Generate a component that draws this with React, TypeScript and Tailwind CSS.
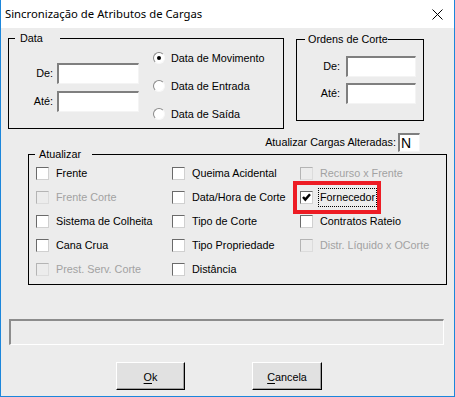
const font = "font-['Liberation_Sans',Arial,sans-serif]";

function Field({ w, h, children }: { w: string; h: string; children?: React.ReactNode }) {
  return (
    <div
      className={`${w} ${h} box-border border-t-2 border-l-2 border-b border-r border-t-[#7f7f7f] border-l-[#7f7f7f] border-b-[#f4f4f4] border-r-[#f4f4f4] bg-white`}
    >
      {children}
    </div>
  );
}

function Radio({ label, checked }: { label: string; checked?: boolean }) {
  return (
    <div className="flex h-[20px] items-center">
      <div className="flex h-[12px] w-[12px] items-center justify-center rounded-full border border-t-[#8a8a8a] border-l-[#8a8a8a] border-b-[#f8f8f8] border-r-[#f8f8f8] bg-white">
        {checked && <div className="h-[4px] w-[4px] rounded-full bg-black" />}
      </div>
      <span className="ml-[6px]">{label}</span>
    </div>
  );
}

function Check({
  label,
  checked,
  disabled,
  focused,
  marked,
}: {
  label: string;
  checked?: boolean;
  disabled?: boolean;
  focused?: boolean;
  marked?: boolean;
}) {
  return (
    <div className="relative flex h-[24px] items-center">
      <div
        className={`flex h-[13px] w-[13px] items-center justify-center border ${
          disabled
            ? "border-t-[#b4b4b4] border-l-[#b4b4b4] border-b-[#dcdcdc] border-r-[#dcdcdc] bg-[#ececec]"
            : "border-t-[#6a6a6a] border-l-[#6a6a6a] border-b-[#d0d0d0] border-r-[#d0d0d0] bg-white"
        }`}
      >
        {checked && (
          <svg width="9" height="9" viewBox="0 0 9 9">
            <path d="M1 4 L3.3 6.6 L8 1.2" fill="none" stroke="#000" strokeWidth="2.4" />
          </svg>
        )}
      </div>
      <span
        className={`ml-[5px] px-[1px] ${disabled ? "text-[#a2a2a2]" : "text-black"} ${
          focused ? "border border-dotted border-black leading-[17px]" : "border border-transparent"
        }`}
      >
        {label}
      </span>
      {marked && (
        <div className="pointer-events-none absolute left-[-7px] top-[-4px] h-[33px] w-[88px] border-4 border-[#ed1c24]" />
      )}
    </div>
  );
}

function Group({
  label,
  left,
  className,
  children,
}: {
  label: string;
  left: string;
  className: string;
  children?: React.ReactNode;
}) {
  return (
    <div className={`relative box-border border border-black ${className}`}>
      <div className={`absolute top-[-7px] ${left} bg-[#ececec] leading-[13px]`}>{label}</div>
      {children}
    </div>
  );
}

export default function App() {
  return (
    <div
      className={`${font} box-border h-[397px] w-[455px] border-x border-b border-[#1c86db] bg-[#ececec] text-[10.8px] text-black`}
    >
      <div className="flex h-[28px] items-center justify-between bg-white pl-[4px] pr-[11px]">
        <span className="font-['Noto_Sans',sans-serif] text-[11.3px] leading-none">
          Sincronização de Atributos de Cargas
        </span>
        <svg width="11" height="11" viewBox="0 0 11 11">
          <path d="M0.5 0.5 L10.5 10.5 M10.5 0.5 L0.5 10.5" stroke="#000" strokeWidth="1" />
        </svg>
      </div>

      <div className="mt-[10px] flex items-start pl-[7px]">
        <Group label="Data" left="left-[6px] w-[45px] pl-[5px]" className="flex h-[91px] w-[276px]">
          <div className="flex w-[130px] flex-col gap-[7px] pt-[24px]">
            <div className="flex items-center justify-end">
              <span>De:</span>
              <div className="ml-[4px]">
                <Field w="w-[82px]" h="h-[21px]" />
              </div>
            </div>
            <div className="flex items-center justify-end">
              <span>Até:</span>
              <div className="ml-[4px]">
                <Field w="w-[82px]" h="h-[21px]" />
              </div>
            </div>
          </div>
          <div className="ml-[14px] flex flex-col gap-[8px] pt-[9px]">
            <Radio label="Data de Movimento" checked />
            <Radio label="Data de Entrada" />
            <Radio label="Data de Saída" />
          </div>
        </Group>

        <Group
          label="Ordens de Corte"
          left="left-[8px] pl-[3px]"
          className="ml-[12px] mt-[1px] flex h-[82px] w-[128px] flex-col items-end gap-[6px] pr-[7px] pt-[16px]"
        >
          <div className="flex items-center">
            <span>De:</span>
            <div className="ml-[6px]">
              <Field w="w-[70px]" h="h-[21px]" />
            </div>
          </div>
          <div className="flex items-center">
            <span>Até:</span>
            <div className="ml-[6px]">
              <Field w="w-[70px]" h="h-[21px]" />
            </div>
          </div>
        </Group>
      </div>

      <div className="mt-[4px] flex items-center justify-end pr-[34px]">
        <span>Atualizar Cargas Alteradas:</span>
        <div className="ml-[2px]">
          <Field w="w-[22px]" h="h-[19px]">
            <span className="block pl-[1px] text-[14px] leading-[16px]">N</span>
          </Field>
        </div>
      </div>

      <Group
        label="Atualizar"
        left="left-[6px] w-[57px] pl-[4px]"
        className="ml-[27px] mt-[2px] h-[131px] w-[419px]"
      >
        <div className="grid grid-cols-[136px_128px_1fr] pl-[7px] pt-[6px]">
          <Check label="Frente" />
          <Check label="Queima Acidental" />
          <Check label="Recurso x Frente" disabled />
          <Check label="Frente Corte" disabled />
          <Check label="Data/Hora de Corte" />
          <Check label="Fornecedor" checked focused marked />
          <Check label="Sistema de Colheita" />
          <Check label="Tipo de Corte" />
          <Check label="Contratos Rateio" />
          <Check label="Cana Crua" />
          <Check label="Tipo Propriedade" />
          <Check label="Distr. Líquido x OCorte" disabled />
          <Check label="Prest. Serv. Corte" disabled />
          <Check label="Distância" />
        </div>
      </Group>

      <div className="ml-[8px] mt-[34px] box-border h-[26px] w-[435px] border-t-2 border-l-2 border-b border-r border-t-[#8c8c8c] border-l-[#8c8c8c] border-b-white border-r-white" />

      <div className="mt-[17px] flex">
        <button className="ml-[115px] box-border h-[28px] w-[69px] border border-t-white border-l-white border-b-black border-r-black bg-[#e1e1e1] pt-[2px] shadow-[inset_-1px_-1px_0_#a0a0a0]">
          <span className="underline underline-offset-2">O</span>k
        </button>
        <button className="ml-[67px] box-border h-[28px] w-[70px] border border-t-white border-l-white border-b-black border-r-black bg-[#e1e1e1] pt-[2px] shadow-[inset_-1px_-1px_0_#a0a0a0]">
          <span className="underline underline-offset-2">C</span>ancela
        </button>
      </div>
    </div>
  );
}
